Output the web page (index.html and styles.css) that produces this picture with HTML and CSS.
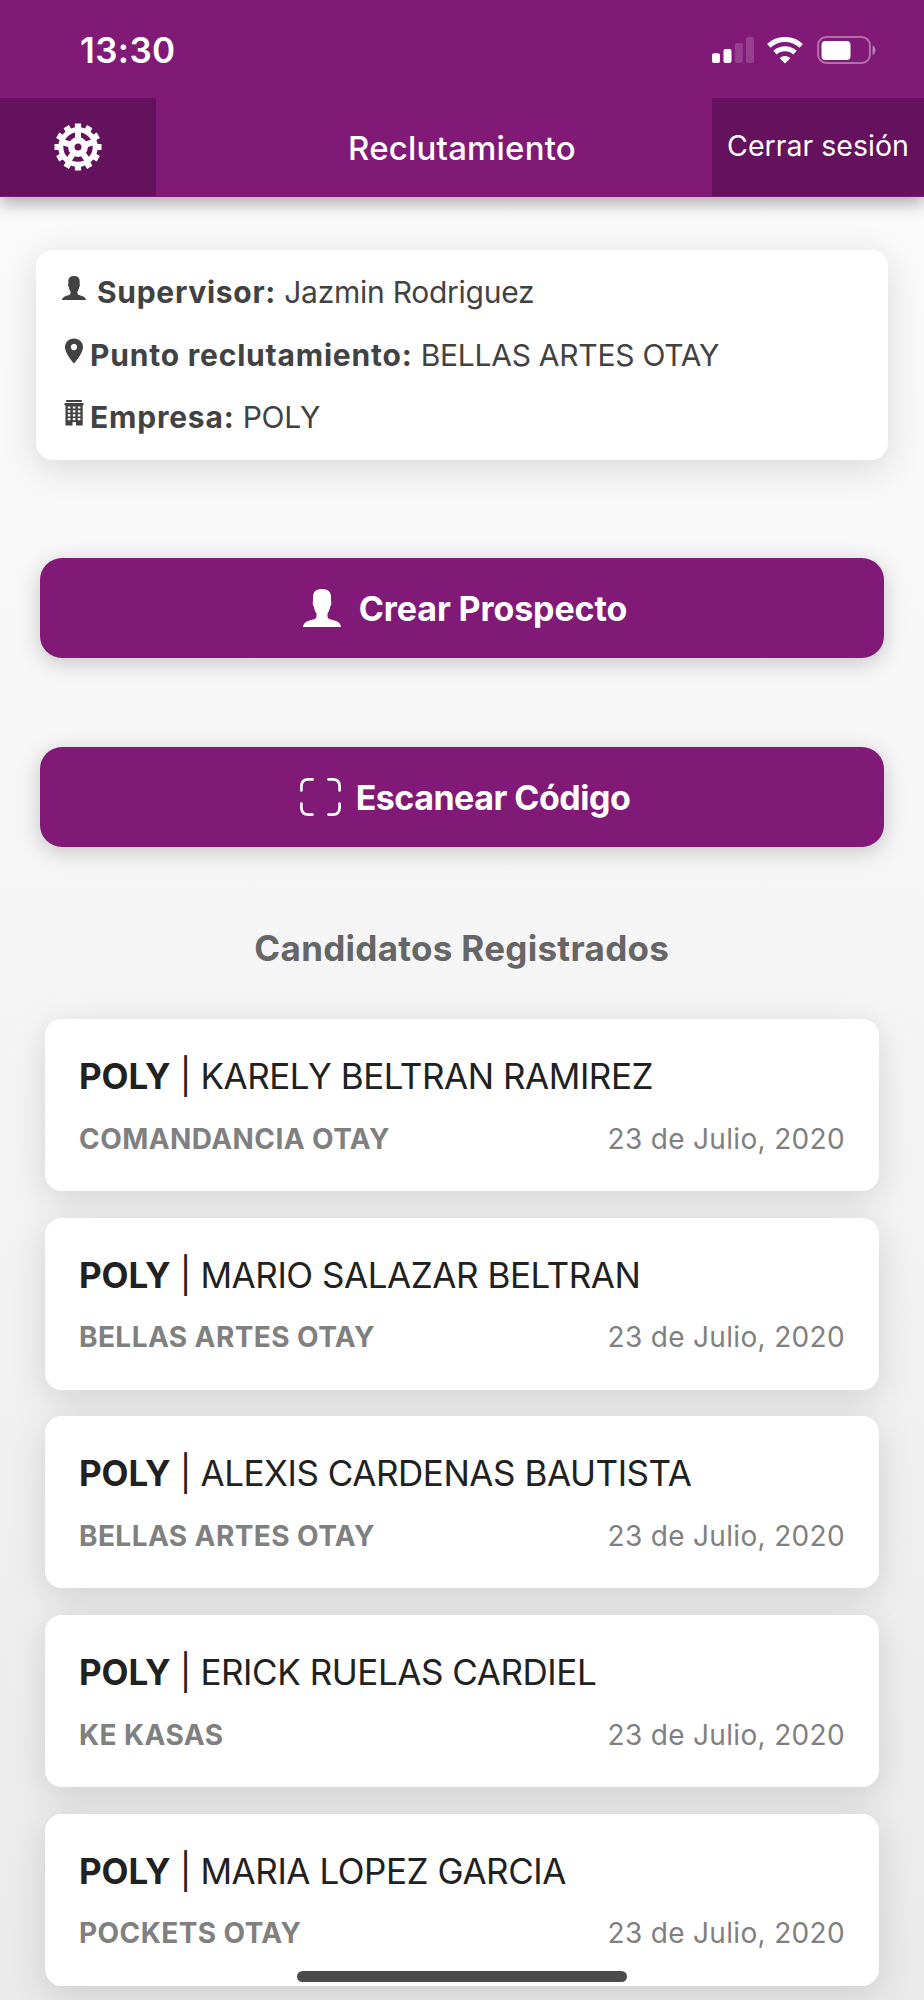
FILE: index.html
```
<!DOCTYPE html>
<html lang="es">
<head>
<meta charset="utf-8">
<title>Reclutamiento</title>
<link rel="stylesheet" href="styles.css">
</head>
<body>
<svg width="0" height="0" class="defs">
  <symbol id="person" viewBox="0 0 38 38">
    <path d="M19 0C13 0 10 2.800 10 8V12.500C9.300 13.500 9.700 16.500 10.800 17.500C11.300 21 12.500 23 13.500 24.500V27C13.500 30 11 30.300 7.500 31.200C2.500 32.500 .3 34.500 0 38H38C37.700 34.500 35.500 32.500 30.500 31.200C27 30.300 24.500 30 24.500 27V24.500C25.500 23 26.700 21 27.200 17.500C28.300 16.500 28.700 13.500 28 12.500V8C28 2.800 25 0 19 0Z"/>
  </symbol>
</svg>
<div class="screen">
  <div class="status">
    <span class="clock">13:30</span>
    <div class="indicators">
      <svg width="42" height="26" viewBox="0 0 42 26" fill="#fff">
        <rect x="0" y="16.300" width="8" height="9.700" rx="2"/>
        <rect x="11.500" y="12" width="8" height="14" rx="2"/>
        <rect x="22.800" y="6" width="8" height="20" rx="2" opacity=".17"/>
        <rect x="34" y="0" width="8" height="26" rx="2" opacity=".17"/>
      </svg>
      <svg class="wifi" width="36" height="27" viewBox="0 0 36 27">
        <g fill="none" stroke="#fff" stroke-width="5">
          <path d="M1.800 8.800C11 .3 25 .3 34.200 8.800"/>
          <path d="M8 15.600C13.600 10.300 22.400 10.300 28 15.600"/>
        </g>
        <path fill="#fff" d="M18 26.500L12.700 21.200C15.600 18.400 20.400 18.400 23.300 21.200Z"/>
      </svg>
      <svg class="battery" width="60" height="28" viewBox="0 0 60 28" fill="#fff">
        <rect x="1.100" y="1.100" width="51.800" height="25.800" rx="8" fill="none" stroke="#fff" stroke-width="2" opacity=".38"/>
        <rect x="4.500" y="5" width="29" height="19" rx="4"/>
        <path d="M55.500 9.500C59.500 11 59.500 17.500 55.500 19Z" opacity=".45"/>
      </svg>
    </div>
  </div>
  <header class="nav">
    <div class="settings">
      <svg width="48" height="48" viewBox="-24 -24 48 48" fill="none" stroke="#fff">
        <circle r="17.200" stroke-width="5"/>
        <circle r="6.700" stroke-width="6.400"/>
        <g stroke-width="6">
          <path d="M0 -8V-16"/>
          <path d="M0 -8V-16" transform="rotate(72)"/>
          <path d="M0 -8V-16" transform="rotate(144)"/>
          <path d="M0 -8V-16" transform="rotate(216)"/>
          <path d="M0 -8V-16" transform="rotate(288)"/>
        </g>
        <g stroke-width="6.200">
          <path d="M0 -23.500V-18M0 23.500V18M-23.500 0H-18M23.500 0H18"/>
          <path d="M0 -23.500V-18M0 23.500V18M-23.500 0H-18M23.500 0H18" transform="rotate(30)"/>
          <path d="M0 -23.500V-18M0 23.500V18M-23.500 0H-18M23.500 0H18" transform="rotate(60)"/>
        </g>
      </svg>
    </div>
    <h1 class="title">Reclutamiento</h1>
    <div class="logout">Cerrar sesión</div>
  </header>
  <main class="content">
    <section class="info">
      <div class="row row-wide">
        <svg class="row-icon" width="24" height="24"><use href="#person"/></svg>
        <span><b>Supervisor:</b> Jazmin Rodriguez</span>
      </div>
      <div class="row">
        <svg class="row-icon" width="24" height="26" viewBox="0 0 24 26"><path fill-rule="evenodd" d="M12 .4C6.900 .4 3 4.200 3 9.200C3 15.500 12 25.500 12 25.500S21 15.500 21 9.200C21 4.200 17.100 .4 12 .4ZM12 6A3.100 3.100 0 1 1 12 12.200A3.100 3.100 0 1 1 12 6Z"/></svg>
        <span><b>Punto reclutamiento:</b> BELLAS ARTES OTAY</span>
      </div>
      <div class="row">
        <svg class="row-icon" width="24" height="26" viewBox="0 0 24 26">
          <rect x="4" y="0" width="16" height="2" rx="1"/>
          <rect x="2.300" y="3" width="19.400" height="2.200" rx="1"/>
          <path fill-rule="evenodd" d="M3.500 5H20.700V25.500H14V22H10.500V25.500H3.500ZM5.800 6.400V8.600H8.400V6.400ZM10.800 6.400V8.600H13.400V6.400ZM15.800 6.400V8.600H18.400V6.400ZM5.800 10.300V12.500H8.400V10.300ZM10.800 10.300V12.500H13.400V10.300ZM15.800 10.300V12.500H18.400V10.300ZM5.800 14.200V16.400H8.400V14.200ZM10.800 14.200V16.400H13.400V14.200ZM15.800 14.200V16.400H18.400V14.200ZM5.800 18.100V20.300H8.400V18.100ZM10.800 18.100V20.300H13.400V18.100ZM15.800 18.100V20.300H18.400V18.100Z"/>
        </svg>
        <span><b>Empresa:</b> POLY</span>
      </div>
    </section>
    <button class="action">
      <svg class="action-person" width="38" height="38" fill="#fff"><use href="#person"/></svg>
      <span class="create">Crear Prospecto</span>
    </button>
    <button class="action action-scan">
      <svg class="scan-icon" width="41" height="38" viewBox="0 0 41 38" fill="none" stroke="#fff" stroke-width="2.700" stroke-linecap="round">
        <path d="M1.400 12.500V8.500Q1.400 1.400 8.500 1.400H12.500M28.500 1.400H32.500Q39.600 1.400 39.600 8.500V12.500M39.600 25.500V29.500Q39.600 36.600 32.500 36.600H28.500M12.500 36.600H8.500Q1.400 36.600 1.400 29.500V25.500"/>
      </svg>
      <span class="scan">Escanear Código</span>
    </button>
    <h2 class="heading">Candidatos Registrados</h2>
    <div class="list">
      <article class="card">
        <div class="name"><b>POLY</b> | KARELY BELTRAN RAMIREZ</div>
        <div class="meta"><b>COMANDANCIA OTAY</b><span>23 de Julio, 2020</span></div>
      </article>
      <article class="card">
        <div class="name"><b>POLY</b> | MARIO SALAZAR BELTRAN</div>
        <div class="meta"><b>BELLAS ARTES OTAY</b><span>23 de Julio, 2020</span></div>
      </article>
      <article class="card">
        <div class="name"><b>POLY</b> | ALEXIS CARDENAS BAUTISTA</div>
        <div class="meta"><b>BELLAS ARTES OTAY</b><span>23 de Julio, 2020</span></div>
      </article>
      <article class="card">
        <div class="name"><b>POLY</b> | ERICK RUELAS CARDIEL</div>
        <div class="meta"><b>KE KASAS</b><span>23 de Julio, 2020</span></div>
      </article>
      <article class="card">
        <div class="name"><b>POLY</b> | MARIA LOPEZ GARCIA</div>
        <div class="meta"><b>POCKETS OTAY</b><span>23 de Julio, 2020</span></div>
      </article>
    </div>
  </main>
  <div class="home-bar"></div>
</div>
</body>
</html>
```
FILE: styles.css
```
* { box-sizing: border-box; }
body { margin: 0; font-family: Inter, "Liberation Sans", sans-serif; }
.defs { display: block; }
.screen {
  position: relative;
  width: 924px;
  height: 2000px;
  overflow: hidden;
  display: flex;
  flex-direction: column;
  background: linear-gradient(#fafafa 10%, #f5f5f5 50%, #eaeaea 100%);
}
.status {
  position: relative;
  z-index: 2;
  height: 98px;
  flex: none;
  display: flex;
  justify-content: space-between;
  padding: 0 47px 0 80px;
  background: #811977;
  color: #fff;
}
.clock { font-size: 35px; font-weight: 600; line-height: 101px; letter-spacing: .4px; }
.indicators { display: flex; align-items: center; height: 100px; }
.wifi { margin-left: 13px; }
.battery { margin-left: 14px; }
.nav {
  position: relative;
  z-index: 1;
  height: 98.500px;
  flex: none;
  display: grid;
  grid-template-columns: 156px 1fr 212px;
  grid-template-rows: 98px;
  background: #811977;
  color: #fff;
  box-shadow: 0 7px 15px rgba(0, 0, 0, .3);
}
.settings { display: flex; align-items: center; justify-content: center; background: #65125e; }
.title { margin: 0; padding-left: 56px; text-align: center; font-size: 33px; font-weight: 550; line-height: 100px; letter-spacing: .2px; }
.logout { background: #65125e; font-size: 28.500px; line-height: 96px; text-align: center; letter-spacing: .02px; }
.content { display: flex; flex-direction: column; padding: 53.500px 36.500px 0 36px; }
.info {
  height: 210px;
  padding: 11px 26px;
  border-radius: 17px;
  background: #fff;
  box-shadow: 0 8px 36px rgba(0, 0, 0, .13);
  color: #424242;
}
.row {
  display: flex;
  gap: 4px;
  height: 62.600px;
  font-size: 30px;
  line-height: 63.600px;
  letter-spacing: -.26px;
}
.row-wide { gap: 11px; }
.row b { letter-spacing: .8px; }
.row-wide b { letter-spacing: .7px; }
.row-icon { flex: none; margin-top: 14px; fill: currentColor; }
.row-wide .row-icon { margin-top: 15px; }
.action {
  display: flex;
  justify-content: center;
  align-items: center;
  height: 99.500px;
  margin: 98px 3.500px 0 4px;
  padding: 2px 0 0 6px;
  border: 0;
  border-radius: 22px;
  background: #811977;
  color: #fff;
  font: 700 34px/50px Inter, "Liberation Sans", sans-serif;
  box-shadow: 0 5px 22px rgba(0, 0, 0, .2);
}
.action svg { margin-top: -1px; }
.action-person { margin-right: 18px; }
.scan-icon { margin-right: 15px; }
.create { letter-spacing: -.11px; }
.action-scan { margin-top: 89.500px; }
.scan { letter-spacing: -.5px; }
.heading {
  margin: 76px 0 0;
  font-size: 35px;
  font-weight: 700;
  line-height: 50px;
  letter-spacing: .29px;
  text-align: center;
  color: #666;
}
.list {
  isolation: isolate;
  display: flex;
  flex-direction: column;
  gap: 26.700px;
  margin: 46.500px 8.500px 0 9px;
}
.card {
  position: relative;
  height: 172px;
  padding: 26px 34px 0 34px;
  border-radius: 17px;
  background: #fff;
}
.card::before {
  content: "";
  position: absolute;
  inset: 0;
  z-index: -1;
  border-radius: 17px;
  box-shadow: 0 8px 36px rgba(0, 0, 0, .13);
}
.name { font-size: 35px; line-height: 62.600px; letter-spacing: -.45px; color: #212121; white-space: nowrap; }
.name b { letter-spacing: -.13px; }
.meta { display: flex; justify-content: space-between; font-size: 28px; line-height: 63px; letter-spacing: .33px; color: #808080; }
.meta b { font-weight: 700; letter-spacing: .42px; }
.home-bar {
  position: absolute;
  left: 297px;
  top: 1971px;
  width: 330px;
  height: 11px;
  border-radius: 6px;
  background: #4b4b4b;
}
```
